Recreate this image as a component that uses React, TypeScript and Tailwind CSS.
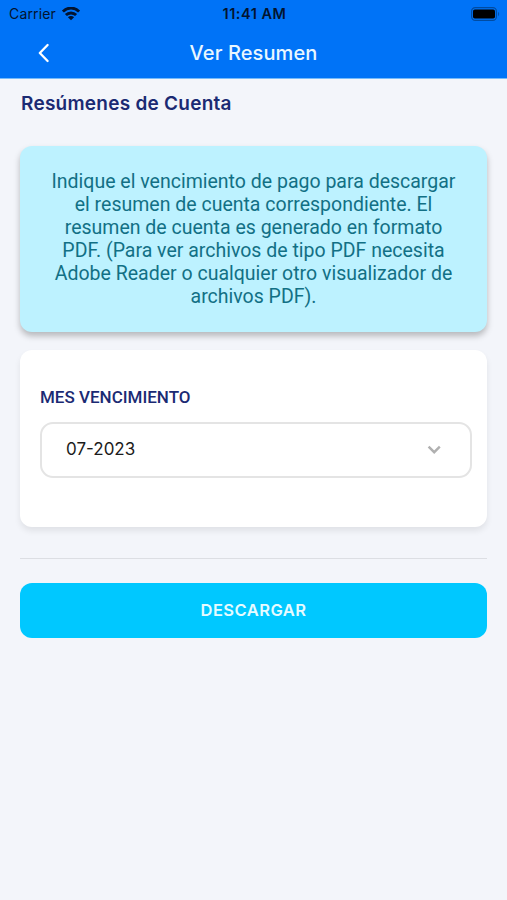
import { useState } from "react"

const months = ["07-2023", "06-2023", "05-2023"]

function WifiIcon() {
  return (
    <svg viewBox="0 0 18 14" className="h-3.5 w-[18px]" fill="none" stroke="currentColor" strokeWidth="2.9">
      <path d="M0.9 4.6C5.5 -0.1 12.5 -0.1 17.1 4.6" />
      <path d="M3.9 8.1C6.7 5.2 11.3 5.2 14.1 8.1" />
      <path d="M9 13.3L5.9 10.3C7.6 8.7 10.4 8.7 12.1 10.3Z" fill="currentColor" stroke="none" />
    </svg>
  )
}

function BatteryIcon() {
  return (
    <svg viewBox="0 0 29 14" className="h-3.5 w-[29px]">
      <rect x="0.6" y="0.6" width="24.8" height="12.8" rx="3.6" fill="none" stroke="#000" strokeOpacity="0.35" strokeWidth="1.2" />
      <rect x="2" y="2.4" width="22" height="9.2" rx="1.8" fill="#000" />
      <path d="M27 4.8C28.6 5.6 28.6 8.4 27 9.2Z" fill="#000" fillOpacity="0.3" />
    </svg>
  )
}

function StatusBar() {
  return (
    <div className="grid h-[27px] grid-cols-3 items-center pr-[7px] pl-[9px] text-[#03142f]">
      <div className="flex items-center gap-1.5">
        <span className="text-[14px] leading-none tracking-[0.15px]">Carrier</span>
        <WifiIcon />
      </div>
      <span className="pt-px text-center text-[14.5px] leading-none font-semibold tracking-[0.5px] whitespace-nowrap">
        11:41 AM
      </span>
      <div className="flex justify-end">
        <BatteryIcon />
      </div>
    </div>
  )
}

function Header() {
  return (
    <header className="h-[79px] border-b border-[#75bbfb] bg-[#0073f7]">
      <StatusBar />
      <div className="grid h-[51px] grid-cols-[1fr_auto_1fr] items-center">
        <button aria-label="Volver" className="pl-[38px] text-white">
          <svg viewBox="0 0 12 20" className="h-5 w-3" fill="none" stroke="currentColor" strokeWidth="2.3" strokeLinecap="round" strokeLinejoin="round">
            <path d="M9.6 2L1.8 10L9.6 18" />
          </svg>
        </button>
        <h1 className="text-[20px] font-medium tracking-[0.1px] text-[#e9f7ff]">Ver Resumen</h1>
      </div>
    </header>
  )
}

export default function App() {
  const [month, setMonth] = useState(months[0])

  const nextMonth = () => {
    setMonth(months[(months.indexOf(month) + 1) % months.length])
  }

  return (
    <div className="min-h-screen bg-[#f3f5fa] font-['Inter',sans-serif]">
      <Header />
      <main className="px-5 pt-[13px]">
        <h2 className="pl-px text-[19px] leading-6 font-semibold tracking-[0.25px] text-[#1b2a73]">Resúmenes de Cuenta</h2>

        <div className="mt-[30px] h-[186px] rounded-xl bg-[#bdf2ff] px-6 pt-[25px] text-center font-['Roboto',sans-serif] text-[19.5px] leading-[22.9px] text-[#127085] shadow-[0_4px_6px_rgba(0,0,0,0.25)]">
          Indique el vencimiento de pago para descargar el resumen de cuenta correspondiente. El resumen de cuenta es
          generado en formato PDF. (Para ver archivos de tipo PDF necesita Adobe Reader o cualquier otro visualizador de
          archivos PDF).
        </div>

        <div className="mt-[18px] h-[177px] rounded-xl bg-white pt-[35px] pr-[15px] pl-5 shadow-[0_4px_6px_rgba(0,0,0,0.08)]">
          <label className="block font-['Roboto',sans-serif] text-[17px] leading-6 font-medium text-[#1b2a73]">
            MES VENCIMIENTO
          </label>
          <button
            onClick={nextMonth}
            className="mt-[13px] flex h-14 w-full items-center justify-between rounded-[13px] border-2 border-[#e4e4e4] pr-[29px] pl-6 text-[17px] text-[#1c1c1c]"
          >
            <span className="pb-px">{month}</span>
            <svg viewBox="0 0 14 10" className="h-2.5 w-3.5" fill="none" stroke="#b0b0b0" strokeWidth="2.4">
              <path d="M1.6 1.6L7.2 7.2L12.8 1.6" />
            </svg>
          </button>
        </div>

        <hr className="mt-[31px] border-[#dcdee3]" />

        <button className="mt-6 h-[55px] w-full rounded-xl bg-[#00c8ff] text-[16.5px] font-semibold tracking-[0.45px] text-[#e6fbff]">
          DESCARGAR
        </button>
      </main>
    </div>
  )
}
